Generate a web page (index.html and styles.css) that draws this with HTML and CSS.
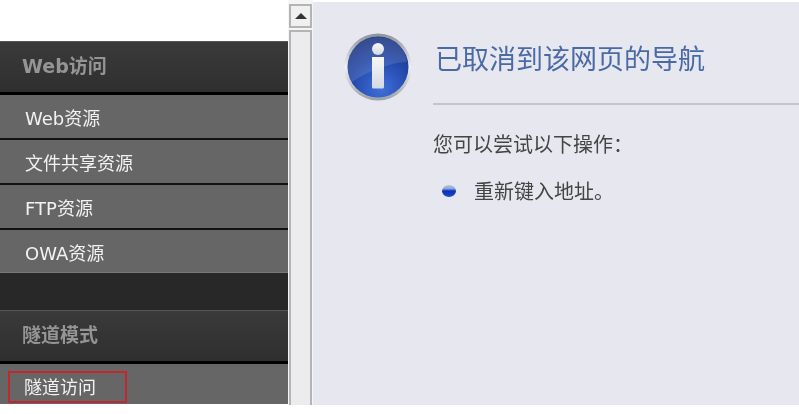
FILE: index.html
```html
<!DOCTYPE html>
<html lang="zh">
<head>
<meta charset="utf-8">
<title>已取消到该网页的导航</title>
<link rel="stylesheet" href="styles.css">
</head>
<body>
<div class="page">
  <nav class="sidebar">
    <div class="group-head">Web访问</div>
    <div class="item">Web资源</div>
    <div class="item">文件共享资源</div>
    <div class="item">FTP资源</div>
    <div class="item item-last">OWA资源</div>
    <div class="gap"></div>
    <div class="group-head">隧道模式</div>
    <div class="item item-tunnel"><span class="marked">隧道访问</span></div>
  </nav>
  <div class="scrollbar">
    <div class="scroll-btn"><span class="arrow"></span></div>
    <div class="scroll-track"></div>
  </div>
  <main class="content">
    <header class="title-row">
      <svg class="info-icon" viewBox="0 0 68 68" width="68" height="68" aria-hidden="true">
        <defs>
          <linearGradient id="ring" x1="0" y1="0" x2="0" y2="1">
            <stop offset="0" stop-color="#8d9198"/>
            <stop offset="0.5" stop-color="#eef0f4"/>
            <stop offset="1" stop-color="#9aa0a8"/>
          </linearGradient>
          <radialGradient id="disc" cx="0.55" cy="0.85" r="0.9">
            <stop offset="0" stop-color="#3f6fdc"/>
            <stop offset="0.55" stop-color="#2347a8"/>
            <stop offset="1" stop-color="#182f78"/>
          </radialGradient>
          <linearGradient id="stem" x1="0" y1="0" x2="0" y2="1">
            <stop offset="0" stop-color="#f6f8fa"/>
            <stop offset="1" stop-color="#d3d9e2"/>
          </linearGradient>
        </defs>
        <circle cx="34" cy="34" r="33.500" fill="url(#ring)"/>
        <circle cx="34" cy="34" r="30.500" fill="url(#disc)"/>
        <path d="M4 30C6 14 19 4 34 4s28 10 29 25C48 29 24 38 8 49 4 43 3 37 4 30z" fill="#fff" opacity="0.12"/>
        <circle cx="34" cy="16" r="6" fill="url(#stem)"/>
        <path d="M28 24h12v30a1.500 1.500 0 0 1-1.500 1.500h-9a1.500 1.500 0 0 1-1.500-1.500z" fill="url(#stem)"/>
      </svg>
      <h1 class="title">已取消到该网页的导航</h1>
    </header>
    <hr class="rule">
    <p class="lead">您可以尝试以下操作：</p>
    <div class="action">
      <span class="bullet"></span>
      <span>重新键入地址。</span>
    </div>
  </main>
</div>
</body>
</html>
```

FILE: styles.css
```css
* { box-sizing: border-box; }
html, body { margin: 0; padding: 0; background: #fff; }
body {
  width: 799px;
  height: 414px;
  overflow: hidden;
  font-family: "DejaVu Sans", "Noto Sans CJK SC", sans-serif;
}
.page { display: flex; height: 414px; }

.sidebar {
  width: 288px;
  height: 405px;
  padding-top: 41px;
  display: flex;
  flex-direction: column;
  filter: blur(0.35px);
}
.group-head {
  height: 54px;
  padding: 14px 0 0 22px;
  background: linear-gradient(#3a3a3a, #2f2f2f);
  border-top: 1px solid #555;
  border-bottom: 3px solid #000;
  color: #959595;
  font-size: 19px;
  line-height: 20px;
  font-weight: bold;
}
.item {
  height: 45px;
  padding: 13px 0 0 25px;
  background: #666;
  border-bottom: 2px solid #111;
  color: #f2f2f2;
  font-size: 18px;
  line-height: 22px;
}
.item-last { height: 43px; border-bottom: 1px solid #777; }
.gap { height: 37px; background: #282828; }
.item-tunnel {
  height: 40px;
  padding: 7px 0 0 8px;
  border-bottom: 0;
}
.marked {
  display: block;
  width: 119px;
  height: 32px;
  padding: 3px 0 0 14px;
  border: 2px solid #c1272d;
  font-size: 18px;
  line-height: 24px;
}

.scrollbar {
  width: 25px;
  height: 405px;
  padding: 4px 1px 0 1px;
  background: #f5f5f7;
  display: flex;
  flex-direction: column;
  gap: 2px;
}
.scroll-btn {
  height: 24px;
  background: #f0f0f0;
  border: 2px solid #b4b4b4;
  display: flex;
  align-items: center;
  justify-content: center;
}
.arrow {
  width: 0;
  height: 0;
  border-left: 6px solid transparent;
  border-right: 6px solid transparent;
  border-bottom: 6px solid #333;
}
.scroll-track {
  flex: 1;
  background: #ececee;
  border: 2px solid #b4b4b4;
  border-bottom: 0;
}

.content {
  flex: 1;
  height: 403px;
  margin-top: 2px;
  padding: 31px 0 0 31px;
  background: #e7e8ef;
  filter: blur(0.3px);
}
.title-row { display: flex; align-items: flex-start; }
.info-icon { display: block; flex: none; }
.title {
  margin: 11px 0 0 23px;
  color: #4a6aa5;
  font-size: 27px;
  line-height: 32px;
  font-weight: normal;
}
.rule {
  margin: 2px 0 0 89px;
  height: 2px;
  border: 0;
  background: #c4c5cb;
}
.lead {
  margin: 26px 0 0 89px;
  color: #444;
  font-size: 20px;
  line-height: 28px;
}
.action {
  margin: 19px 0 0 98px;
  display: flex;
  align-items: center;
  gap: 18px;
  color: #444;
  font-size: 20px;
  line-height: 28px;
}
.bullet {
  width: 14px;
  height: 12px;
  margin-bottom: 2px;
  border-radius: 50%;
  background: linear-gradient(#b4c4e4 0, #8ea6dc 30%, #0b2fb0 50%, #1a4fd0 100%);
}
```
